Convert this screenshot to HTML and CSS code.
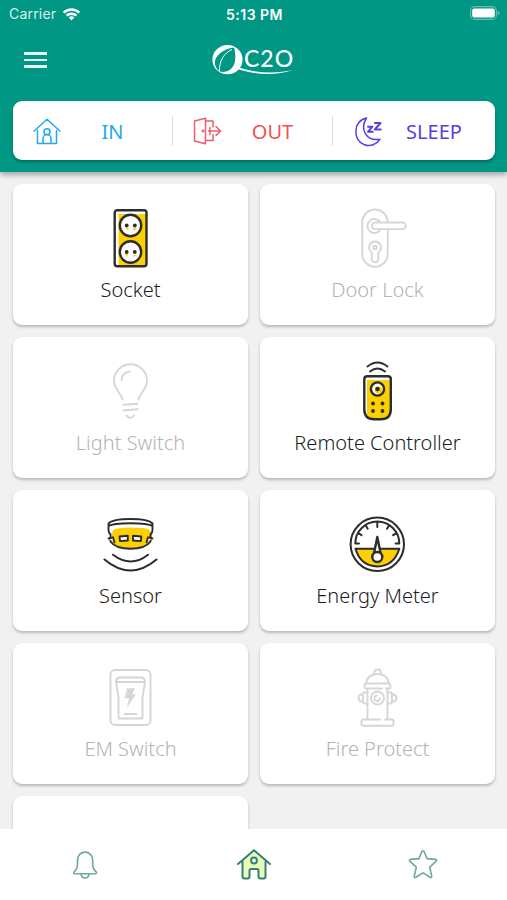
FILE: index.html
```html
<!DOCTYPE html>
<html lang="en">
<head>
  <meta charset="UTF-8">
  <meta name="viewport" content="width=device-width, initial-scale=1">
  <title>C2O</title>
  <link rel="stylesheet" href="styles.css">
</head>
<body>

  <header class="header">
    <div class="status">
      <div class="status-left">
        <span>Carrier</span>
        <svg class="wifi" viewBox="0 0 20 15" fill="none" stroke="#fff" stroke-width="2.7">
          <path d="M1.6 6a12 12 0 0 1 16.8 0M4.7 9.3a7.6 7.6 0 0 1 10.6 0"/>
          <path d="M10 14.4 7 11.3a4.4 4.4 0 0 1 6 0z" fill="#fff" stroke="none"/>
        </svg>
      </div>
      <div class="status-time">5:13 PM</div>
      <div class="status-right">
        <svg class="battery" viewBox="0 0 30 14">
          <rect x=".6" y=".6" width="25.8" height="12.8" rx="4" fill="none" stroke="#6bbdb4" stroke-width="1.1"/>
          <rect x="2.2" y="2.4" width="22.6" height="9.2" rx="2" fill="#fff"/>
          <path d="M27.6 4.8q2 .7 2 2.2t-2 2.2z" fill="#6bbdb4"/>
        </svg>
      </div>
    </div>

    <div class="topbar">
      <div class="menu"><span></span><span></span><span></span></div>
      <div class="logo">
        <svg class="logo-mark" viewBox="0 0 84 32">
          <path d="M15.5 1A15 14.6 0 1 0 15.5 30.3A15 14.6 0 1 0 15.5 1z" fill="#fff"/>
          <path d="M22 3.5C11 5 2.5 12 2.8 19C3.2 23 5 26 8.5 27.8C14 28.5 19 27 22 20.5C24 15 23.5 8 22 3.5z" fill="#009785"/>
          <path d="M20 5.5C12 9 7 17 7.5 27.5" fill="none" stroke="#fff" stroke-width="1"/>
          <path d="M27 23.5C43 29 64 30 81 26C64 32 43 31 26 25z" fill="#fff"/>
        </svg>
        <span class="logo-text">C2O</span>
      </div>
    </div>

    <div class="modes">
      <div class="mode mode-in">
        <svg viewBox="0 0 28 28">
          <path d="M1.2 14 14 2.2 26.800 14M4.500 13.500v13h19v-13M10 26.500v-5a4 4 0 0 1 8 0v5"/>
          <circle cx="14" cy="14.800" r="3"/>
        </svg>
        <span>IN</span>
      </div>
      <div class="mode mode-out">
        <svg viewBox="0 0 28 28">
          <path d="M12.5 1.200v25.600L1.500 24V4zM12.500 4H20v6M12.500 23.500H20v-6M15.500 14H27M23 9.500l4.500 4.500-4.500 4.500M17 10.500v7"/>
          <circle cx="10" cy="14" r=".7"/>
        </svg>
        <span>OUT</span>
      </div>
      <div class="mode mode-sleep">
        <svg viewBox="0 0 28 28">
          <path d="M11.500 1C4.500 2.500 1 8 1 13.500a13 13 0 0 0 24 8.700C11 24.500 4.500 12 11.500 1z"/>
          <path d="M13 9.700h4.500l-4.500 5h4.800M19.800 6h5.700l-5.700 6.500h6" stroke-width="1.900"/>
        </svg>
        <span>SLEEP</span>
      </div>
    </div>
  </header>

  <main class="devices">
    <div class="device on">
      <svg viewBox="0 0 60 60">
        <path class="fill" d="M18.500 6H46v52H18.500z"/>
        <rect x="14.700" y="2.200" width="31.800" height="56" rx="2.500"/>
        <circle cx="30.500" cy="17.500" r="10.700" fill="#fff"/>
        <circle cx="30.500" cy="44" r="10.700" fill="#fff"/>
        <path class="fill" d="M25 20h3.500v2.500zM33 20h4l-3 3zM24 46h4l-1 2.500zM33 47h4l-3 2z"/>
        <g class="dot">
          <circle cx="26.700" cy="17.500" r="1.900"/><circle cx="34.800" cy="17.500" r="1.900"/>
          <circle cx="26.700" cy="44" r="1.900"/><circle cx="34.800" cy="44" r="1.900"/>
        </g>
      </svg>
      <span>Socket</span>
    </div>

    <div class="device">
      <svg viewBox="0 0 60 60">
        <path d="M40.700 13.500A12.700 12.700 0 0 0 15.300 15v31a12.700 12.700 0 0 0 25.400 0V21.500"/>
        <path d="M33.500 14.500a7 7 0 1 0 0 7M28 14.500h27.500a3.300 3.300 0 0 1 0 6.600H28a3.300 3.300 0 0 1 0-6.600z"/>
        <path d="M24.800 44.500a6 6 0 1 1 6.500 0v6.500a3.200 3.200 0 0 1-6.500 0z"/>
        <circle cx="28" cy="39.500" r="1.800"/>
      </svg>
      <span>Door Lock</span>
    </div>

    <div class="device">
      <svg viewBox="0 0 60 60">
        <path d="M22.500 38.500C21 31 14 29 14 19.800a16.500 16.500 0 0 1 33 0C47 29 40 31 38.500 38.500"/>
        <path d="M21.500 19q.5-7 8-8.500M23.500 43.800l14-1M23.500 49.500l14-1.200M26.500 54.500q4 4.500 7.500 0"/>
      </svg>
      <span>Light Switch</span>
    </div>

    <div class="device on">
      <svg viewBox="0 0 60 60">
        <path class="fill" d="M20 19h24v30q-1 9-10 9H25q-6-3-5-8z"/>
        <path d="M20.300 15.300h20.500q3 0 3 3v30q0 10-10 10h-6.500q-10 0-10-10v-30q0-3 3-3z"/>
        <circle cx="30.500" cy="28" r="6.600" fill="#fff"/>
        <circle class="fill" cx="31.500" cy="29" r="3.600"/>
        <path d="M20.500 5.500q10-8 20 0M23 10.500q7.500-6 15 0" stroke-width="1.900"/>
        <g class="dot">
          <circle cx="30.500" cy="28" r="2.300"/>
          <circle cx="26" cy="42.500" r="1.900"/><circle cx="35.500" cy="42.500" r="1.900"/>
          <circle cx="26" cy="50" r="1.900"/><circle cx="35.500" cy="50" r="1.900"/>
        </g>
      </svg>
      <span>Remote Controller</span>
    </div>

    <div class="device on">
      <svg viewBox="0 0 60 60">
        <path d="M8.500 9.500q4-4.500 22-4.500t22 4.500v16q-5 9.500-22 9.500T8.500 25.500z" fill="#fff" stroke="none"/>
        <path class="fill" d="M12.500 17q2-3.500 18-3.500t18 2l3.500 3v7q-5 8.500-21.500 8.500T11 27z"/>
        <path d="M8.500 9.500q4-4.500 22-4.500t22 4.500v6.500q0 3-2 4.500M10.500 20.500q-2-1.500-2-4.500V9.500M8.500 12q4-2.800 22-2.800t22 2.800M10.500 20v7.500q5 7.200 20 7.200t20-7.200V20" stroke-width="1.900"/>
        <path d="M19.500 22.500l8.300-.8v4.800l-7.800.6zM33 21.700l8.300.8-.5 4.600-7.800-.6zM8.500 24.500l4.500-1.200 1.500 5M52.500 24.500 48 23.300l-1.500 5" fill="#fff" stroke-width="1.900"/>
        <path d="M13 40.800q18 13.500 35 0M4.500 45.500q26 22 52 0" stroke-width="2"/>
      </svg>
      <span>Sensor</span>
    </div>

    <div class="device on">
      <svg viewBox="0 0 60 60">
        <circle cx="30.300" cy="30.300" r="26.700" stroke-width="2"/>
        <path class="fill" d="M9.500 35h42q-4 17-21 17.500Q14 52 9.500 35z"/>
        <path d="M8.500 34.800h43.800Q47 52 30.300 52.500 13.500 52 8.500 34.800z" stroke-width="2"/>
        <path d="M12 29.500H8.300a22 22 0 0 1 44 0h-3.700M11.300 19.200l3.200 2M18.700 11.500l2 3.200M30.300 8v5M42 11.500l-2 3.200M49.300 19.200l-3.200 2" stroke-width="2"/>
        <path d="M27 39.500l3.300-16.500 3.300 16.500z" fill="#fff"/>
        <circle cx="30.300" cy="43" r="5" fill="#fff"/>
      </svg>
      <span>Energy Meter</span>
    </div>

    <div class="device">
      <svg viewBox="0 0 60 60">
        <rect x="10.500" y="3" width="40" height="55" rx="4.500"/>
        <path d="M19 10.500h23q3 1 3 4.500H16q0-3.500 3-4.500zM16 15l2.500 15.500v21h24v-21L45 15M24.500 47h12"/>
        <path d="M27.500 21.500h7l-2.500 6h3.500l-8 12 2-8.500h-4.500z" fill="#d6d6d6" stroke-width=".6"/>
      </svg>
      <span>EM Switch</span>
    </div>

    <div class="device">
      <svg viewBox="0 0 60 60">
        <path d="M19 16.500q1.500-9.500 11.500-9.500T42 16.500M27 7q0-4.500 3.500-4.500T34 7M35 21.500H19q-1.500 0-1.500-1.500v-2q0-1.500 1.500-1.500h23q1.500 0 1.500 1.500v2q0 1.500-1.500 1.500h-3"/>
        <path d="M20.500 21.500v31M40.500 21.500v31M33 52.500H16q-1.500 0-1.500 1.500v3.500q0 1.200 1.500 1.200h29q1.500 0 1.500-1.200V54q0-1.500-1.500-1.500h-7"/>
        <path d="M20.500 25.500h-3q-1.500 0-1.500 1.500v8q0 1.500 1.500 1.500h3M16 27.500h-2q-2.500 1-2.500 3.500t2.500 3.500h2M40.500 25.500h3q1.500 0 1.500 1.500v8q0 1.500-1.500 1.500h-3M45 27.500h2q2.500 1 2.500 3.500T47 34.500h-2"/>
        <circle cx="30.500" cy="31" r="6.500"/>
        <path d="M29.500 28.500a2.800 2.800 0 1 0 3.500 3"/>
      </svg>
      <span>Fire Protect</span>
    </div>

    <div class="device"></div>
  </main>

  <nav class="tabs">
    <div class="tab">
      <svg viewBox="0 0 34 34">
        <path d="M5.800 25.200q3.700-3 3.700-8.500v-4a7.600 7.600 0 0 1 15.200 0v4q0 5.500 3.700 8.500.4 1.500-1 1.500H6.800q-1.400 0-1-1.500zM13 26.800q.5 4.200 4 4.200t4-4.200"/>
      </svg>
    </div>
    <div class="tab active">
      <svg viewBox="0 0 34 34">
        <path d="M5 15 17 4l12 11v14.500q0 2-2 2h-3.500q-2 0-2-2v-6q0-1.500-1.500-1.500h-5.500q-1.500 0-1.500 1.500v6q0 2-2 2H7q-2 0-2-2z" fill="#e9fcb7" stroke="none"/>
        <path d="M1 17 17 3.200 33 17M5.500 14.500v15q0 2 2 2h3q2 0 2-2v-5.800q0-1.700 1.700-1.700h5.600q1.700 0 1.700 1.700v5.800q0 2 2 2h3q2 0 2-2v-15"/>
        <circle cx="17" cy="13.500" r="2.900" fill="#fff"/>
      </svg>
    </div>
    <div class="tab">
      <svg viewBox="0 0 34 34">
        <path d="M17 3.800q.8 0 1.200 1l2.800 6.800 8.200.8q2.400.4.800 2l-6.300 5.800 2 8.800q.2 2.200-1.700 1.300L17 25.900l-7 4.400q-1.900.9-1.700-1.300l2-8.800L4 14.400q-1.600-1.600.8-2l8.200-.8 2.800-6.800q.4-1 1.200-1z"/>
      </svg>
    </div>
  </nav>

</body>
</html>
```

FILE: styles.css
```css
* {
  box-sizing: border-box;
}
body {
  margin: 0;
  height: 900px;
  display: flex;
  flex-direction: column;
  overflow: hidden;
  background: #f1f1f1;
  font-family: 'Noto Sans', sans-serif;
}
svg {
  display: block;
}

.header {
  position: relative;
  flex: none;
  height: 172px;
  background: #009785;
  box-shadow: 0 3px 5px rgba(0, 0, 0, 0.3);
}
.status {
  display: grid;
  grid-template-columns: 1fr auto 1fr;
  align-items: center;
  height: 28px;
  padding: 0 7px 0 9px;
  color: #fff;
  font-family: Inter, sans-serif;
  font-size: 14px;
}
.status-left {
  display: flex;
  align-items: center;
  gap: 6px;
  margin-top: -1px;
  color: #d9f0ed;
  letter-spacing: 0.2px;
}
.wifi {
  width: 19px;
  height: 14px;
}
.status-time {
  font-weight: 600;
  font-size: 14px;
  letter-spacing: 0.5px;
}
.status-right {
  display: flex;
  justify-content: flex-end;
  margin-top: -2px;
}
.battery {
  width: 30px;
  height: 14px;
}

.topbar {
  display: grid;
  grid-template-columns: 1fr 82px 1fr;
  height: 73px;
  padding: 16px 13px 0 24px;
}
.menu {
  display: flex;
  flex-direction: column;
  gap: 4px;
  padding-top: 8px;
}
.menu span {
  width: 23px;
  height: 2.5px;
  background: #e4f5f2;
}
.logo {
  position: relative;
  width: 84px;
  height: 32px;
  margin-left: -6px;
}
.logo-mark {
  width: 84px;
  height: 32px;
}
.logo-text {
  position: absolute;
  left: 32px;
  top: 0;
  color: #fff;
  font: 500 23px/28px Lato, sans-serif;
  letter-spacing: 1px;
}

.modes {
  display: flex;
  height: 59px;
  margin: 0 12px 0 13px;
  background: #fff;
  border-radius: 9px;
  box-shadow: 0 2px 3px rgba(0, 0, 0, 0.3);
}
.mode {
  position: relative;
  flex: 1;
  display: flex;
  align-items: center;
  padding-left: 20px;
}
.mode-sleep {
  padding-left: 22px;
}
.mode + .mode::before {
  content: '';
  position: absolute;
  left: -1px;
  top: 15px;
  width: 1px;
  height: 30px;
  background: #dedede;
}
.mode svg {
  width: 28px;
  height: 28px;
  overflow: visible;
  fill: none;
  stroke: currentColor;
  stroke-width: 1.5;
  stroke-linejoin: round;
  stroke-linecap: round;
}
.mode span {
  flex: 1;
  padding: 1px 9px 0 0;
  text-align: center;
  font-size: 20px;
}
.mode-in {
  color: #22a9ee;
}
.mode-out {
  color: #ee5c6c;
}
.mode-out span {
  color: #ef5350;
}
.mode-sleep {
  color: #593ee0;
}
.mode-sleep span {
  padding-right: 10px;
}

.devices {
  flex: 1;
  min-height: 0;
  overflow: hidden;
  display: grid;
  grid-template-columns: 1fr 1fr;
  grid-auto-rows: 141px;
  gap: 12px;
  padding: 12px 12px 0 13px;
}
.device {
  display: flex;
  flex-direction: column;
  align-items: center;
  padding-top: 24px;
  background: #fff;
  border-radius: 9px;
  box-shadow: 0 2px 3px rgba(0, 0, 0, 0.24);
  color: #b4b4b4;
}
.device svg {
  width: 60px;
  height: 60px;
  margin-left: -1px;
  fill: none;
  stroke: #d6d6d6;
  stroke-width: 1.9;
  stroke-linecap: round;
  stroke-linejoin: round;
}
.device span {
  margin-top: 8px;
  font-size: 20px;
  font-weight: 300;
  line-height: 28px;
}
.device.on {
  color: #1c1c1c;
}
.device.on svg {
  stroke: #2d2d2d;
  stroke-width: 2.4;
}
.device.on svg .fill {
  fill: #fdd002;
  stroke: none;
}
.device.on svg .dot {
  fill: #2d2d2d;
  stroke: none;
}

.tabs {
  position: relative;
  flex: none;
  display: flex;
  height: 71px;
  background: #fff;
}
.tab {
  flex: 1;
  display: flex;
  justify-content: center;
  padding-top: 18px;
}
.tab svg {
  width: 34px;
  height: 34px;
  fill: none;
  stroke: #6fa99a;
  stroke-width: 1.6;
  stroke-linecap: round;
  stroke-linejoin: round;
}
.tab.active svg {
  stroke: #347f78;
  stroke-width: 2;
}
```
